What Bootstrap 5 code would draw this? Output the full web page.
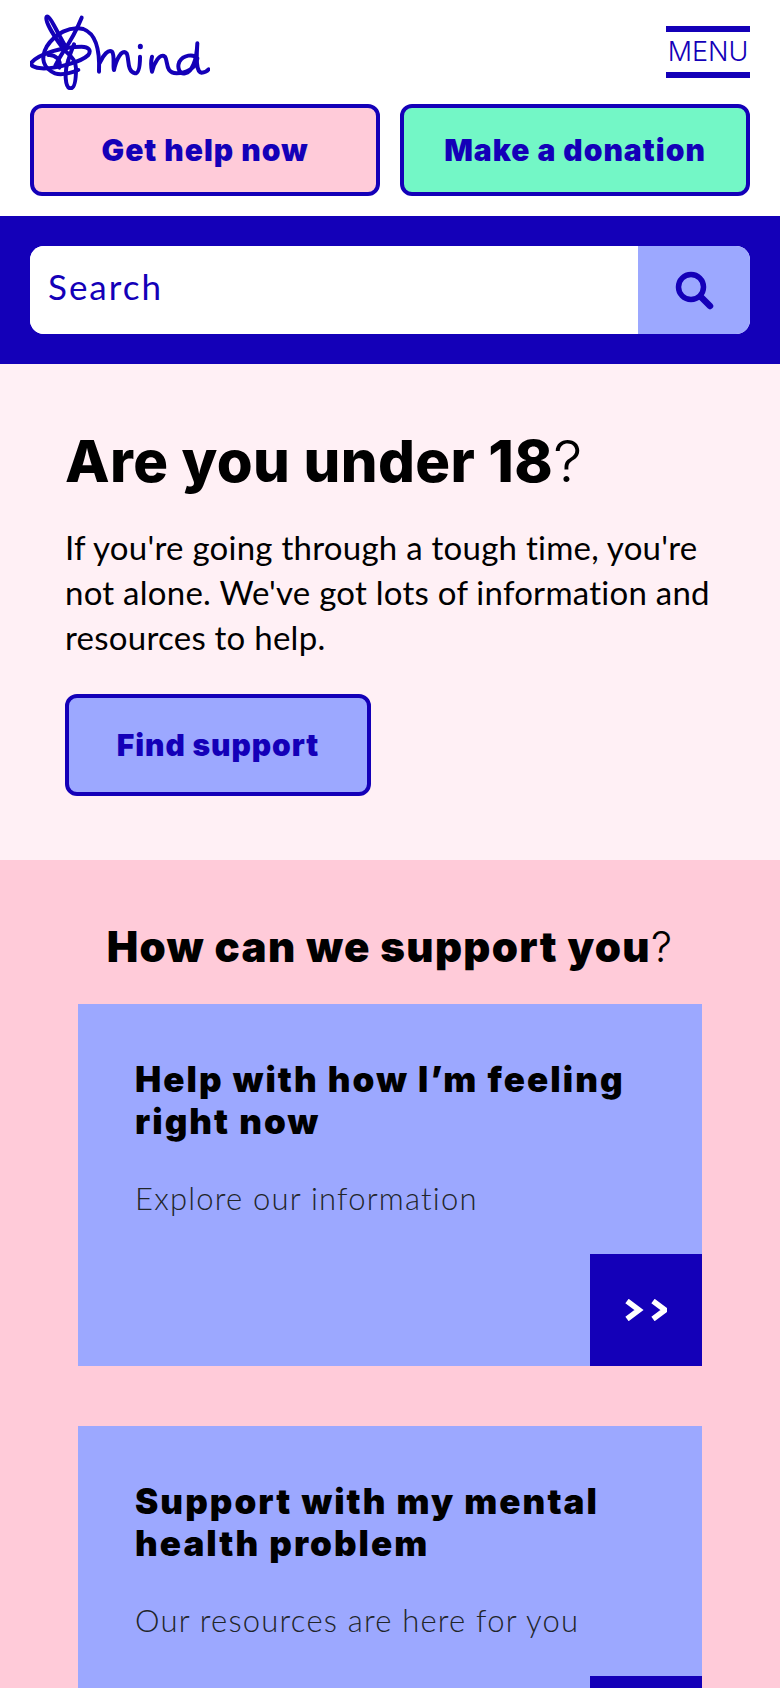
<!DOCTYPE html>
<html lang="en">
<head>
<meta charset="utf-8">
<title>Mind</title>
<link href="https://cdn.jsdelivr.net/npm/bootstrap@5.3.0/dist/css/bootstrap.min.css" rel="stylesheet">
<style>
html, body { height: 1688px; overflow: hidden; }
body { font-family: Lato, "Liberation Sans", sans-serif; background: #fff; color: #000; font-variant-ligatures: none; }
.mh-head { padding: 14px 30px 20px; }
.mh-top { height: 90px; }
.mh-logo { width: 180px; height: 76px; display: block; }
.mh-menu { width: 84px; height: 52px; margin-top: 12px; border-top: 6px solid #1400b8; border-bottom: 6px solid #1400b8; color: #1400b8; font-family: Inter, sans-serif; font-weight: 300; font-size: 27px; line-height: 39px; text-align: center; text-decoration: none; white-space: nowrap; }
.mh-actions { gap: 20px; }
.mh-btn { height: 92px; border: 4px solid #1400b8; border-radius: 12px; color: #1400b8; font-family: Inter, sans-serif; font-weight: 900; font-size: 30px; letter-spacing: 1px; padding: 0; }
.mh-btn:hover { color: #1400b8; }
.mh-pink, .mh-pink:hover { background: #ffcbd9; }
.mh-mint, .mh-mint:hover { background: #73f7c6; }
.mh-band { background: #1400b8; padding: 30px; height: 148px; }
.mh-field { height: 88px; border-radius: 14px; overflow: hidden; background: #fff; }
.mh-input { border: 0; border-radius: 0; height: 88px; padding: 0 18px 8px; font-size: 35px; letter-spacing: 2px; color: #1400b8; font-family: Lato, sans-serif; }
.mh-input::placeholder { color: #1400b8; opacity: 1; }
.mh-go { width: 112px; height: 88px; background: #9ca8ff; border: 0; border-radius: 0; }
.mh-hero { background: #fff0f5; height: 496px; padding: 64px 65px; }
.mh-h1 { font-family: Inter, sans-serif; font-weight: 800; font-size: 58px; line-height: 66px; letter-spacing: .4px; margin-bottom: 31px; }
.mh-thin { font-weight: 300; }
.mh-copy { font-size: 33px; line-height: 45px; letter-spacing: .25px; margin-bottom: 34px; }
.mh-find { width: 306px; height: 102px; background: #9ca8ff; font-size: 30px; letter-spacing: .9px; }
.mh-find:hover { background: #9ca8ff; }
.mh-sec { background: #ffcbd9; padding: 60px 78px 0 78px; height: 1000px; }
.mh-h2 { font-family: Inter, sans-serif; font-weight: 900; font-size: 42px; line-height: 54px; letter-spacing: 1.3px; text-align: center; margin: 0 -20px 30px; }
.mh-tile { height: 362px; background: #9ca8ff; margin-bottom: 60px; padding: 54px 57px; }
.mh-tile h3 { font-family: Inter, sans-serif; font-weight: 900; font-size: 35px; line-height: 42px; letter-spacing: 2.05px; margin-bottom: 36px; }
.mh-tile p { font-size: 31px; line-height: 40px; letter-spacing: 1.2px; font-weight: 300; color: #212529; margin: 0; }
.mh-arrow { right: 0; bottom: 0; width: 112px; height: 112px; background: #1400b8; }
</style>
</head>
<body>
<header class="mh-head bg-white">
  <div class="mh-top d-flex justify-content-between align-items-start">
    <a href="#" aria-label="Mind">
      <svg class="mh-logo" viewBox="30 27 540 228" fill="none" stroke="#1400b8" stroke-width="12" stroke-linecap="round" stroke-linejoin="round">
        <path d="M185 38C172 70 150 110 130 140C118 158 112 170 106 182"/>
        <path d="M140 130C115 90 90 30 80 35C72 45 100 90 125 125C145 150 168 160 168 190C168 220 165 250 152 250C135 250 132 200 145 165C150 148 155 135 162 118"/>
        <path d="M237 200C240 130 225 85 190 72C150 62 105 85 80 125C60 160 70 190 105 205C125 212 150 205 175 195"/>
        <path d="M35 172C60 145 130 125 185 125C205 125 215 135 205 150C185 170 110 192 65 190C45 190 30 182 35 172Z"/>
        <path d="M85 150C105 148 125 165 118 188"/>
        <path d="M240 172C250 150 265 132 276 140C285 150 278 185 282 195C288 165 305 130 320 145C328 160 320 200 345 205C355 205 360 190 360 155"/>
        <path d="M361 124L361 125" stroke-width="15"/>
        <path d="M396 155C392 170 394 190 396 200C402 175 420 142 435 155C445 170 435 205 470 205C495 205 530 190 532 160C520 145 490 150 478 170C470 190 480 208 495 205C515 200 530 170 532 115C530 150 525 200 545 203C555 203 562 198 566 193"/>
      </svg>
    </a>
    <a href="#" class="mh-menu d-block">MENU</a>
  </div>
  <div class="d-flex mh-actions">
    <a href="#" class="btn mh-btn mh-pink d-flex align-items-center justify-content-center w-50">Get help now</a>
    <a href="#" class="btn mh-btn mh-mint d-flex align-items-center justify-content-center w-50">Make a donation</a>
  </div>
</header>
<div class="mh-band">
  <form class="mh-field d-flex">
    <input class="form-control mh-input shadow-none" type="text" placeholder="Search" aria-label="Search">
    <button class="btn mh-go flex-shrink-0 d-flex align-items-center justify-content-center" type="button" aria-label="Search">
      <svg width="40" height="40" viewBox="0 0 40 40" fill="none" stroke="#1400b8" stroke-linecap="round"><circle cx="17" cy="17" r="12.5" stroke-width="5.5"/><path d="M27 27L36 36" stroke-width="6.5"/></svg>
    </button>
  </form>
</div>
<section class="mh-hero">
  <h1 class="mh-h1">Are you under 18<span class="mh-thin">?</span></h1>
  <p class="mh-copy">If you're going through a tough time, you're not alone. We've got lots of information and resources to help.</p>
  <a href="#" class="btn mh-btn mh-find d-flex align-items-center justify-content-center">Find support</a>
</section>
<section class="mh-sec">
  <h2 class="mh-h2">How can we support you<span class="mh-thin">?</span></h2>
  <div class="mh-tile position-relative">
    <h3>Help with how I’m feeling right now</h3>
    <p>Explore our information</p>
    <a href="#" class="mh-arrow position-absolute d-flex align-items-center justify-content-center" aria-label="Go">
      <svg width="42" height="22" viewBox="0 0 42 22" fill="none" stroke="#fff" stroke-width="5.5"><path d="M2 2L14 11L2 20M28 2L40 11L28 20"/></svg>
    </a>
  </div>
  <div class="mh-tile position-relative">
    <h3>Support with my mental health problem</h3>
    <p>Our resources are here for you</p>
    <a href="#" class="mh-arrow position-absolute d-flex align-items-center justify-content-center" aria-label="Go">
      <svg width="42" height="22" viewBox="0 0 42 22" fill="none" stroke="#fff" stroke-width="5.5"><path d="M2 2L14 11L2 20M28 2L40 11L28 20"/></svg>
    </a>
  </div>
</section>
<script src="https://cdn.jsdelivr.net/npm/bootstrap@5.3.0/dist/js/bootstrap.bundle.min.js"></script>
</body>
</html>
